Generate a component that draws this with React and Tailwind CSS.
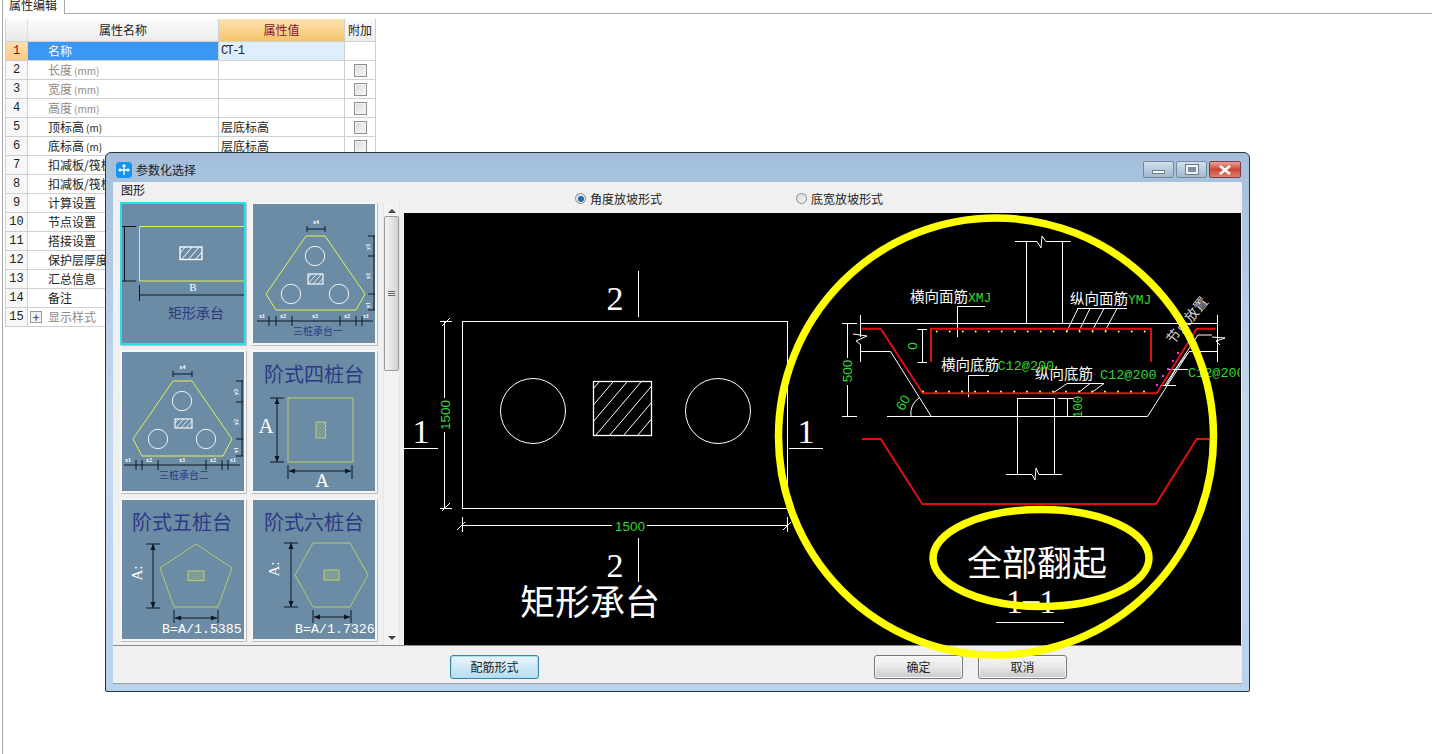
import React from 'react';

const rows = [
  { name: '名称', value: 'CT-1', selected: true, noCheck: true },
  { name: '长度', unit: '(mm)', muted: true },
  { name: '宽度', unit: '(mm)', muted: true },
  { name: '高度', unit: '(mm)', muted: true },
  { name: '顶标高', unit: '(m)', value: '层底标高' },
  { name: '底标高', unit: '(m)', value: '层底标高' },
  { name: '扣减板/筏板面筋' },
  { name: '扣减板/筏板底筋' },
  { name: '计算设置' },
  { name: '节点设置' },
  { name: '搭接设置' },
  { name: '保护层厚度' },
  { name: '汇总信息' },
  { name: '备注' },
  { name: '显示样式', muted: true, plus: true, noCheck: true },
];

const NAVY = '#2d3a82';
const LIME = '#e2f24e';
const OLIVE = '#b6ca72';
const GREEN = '#35d635';
const RED = '#e01010';

const PropRow = ({ row, index }) => (
  <div className="flex h-[19px] border-b border-[#cfcfcf] text-[12px] leading-[18px]">
    <div
      className={`w-[22px] shrink-0 border-r border-[#cfcfcf] text-center font-['Liberation_Mono',monospace] ${
        row.selected ? 'bg-gradient-to-b from-[#fde0b0] to-[#fbc987] text-[#8a1020]' : 'bg-[#f7f7f7] text-[#222]'
      }`}
    >
      {index + 1}
    </div>
    <div
      className={`relative w-[191px] shrink-0 border-r border-[#cfcfcf] pl-[20px] whitespace-nowrap ${
        row.selected ? 'bg-[#3a97f3] text-white' : row.muted ? 'text-[#8a8a8a]' : 'text-[#222]'
      }`}
    >
      {row.plus && (
        <span className="absolute left-[2px] top-[3px] flex h-[12px] w-[12px] items-center justify-center border border-[#999] bg-[#f0f0f0] text-[12px] leading-none text-[#333]">
          +
        </span>
      )}
      {row.name}
      {row.unit && <span className="ml-[2px] text-[10px]">{row.unit}</span>}
    </div>
    <div
      className={`w-[126px] shrink-0 border-r border-[#cfcfcf] pl-[2px] ${
        row.selected ? "bg-[#dfeefc] font-['Liberation_Mono',monospace] tracking-[-1.6px]" : ''
      } text-[#222]`}
    >
      {row.value}
    </div>
    <div className="flex w-[31px] shrink-0 items-center justify-center border-r border-[#cfcfcf]">
      {!row.noCheck && (
        <span className="h-[13px] w-[13px] border border-[#8e8e8e] bg-gradient-to-br from-[#d8d8d8] to-[#fafafa] shadow-[inset_0_0_0_1px_#f4f4f4]" />
      )}
    </div>
  </div>
);

const PropertyTable = () => (
  <div className="ml-[2px] mt-[5px] w-[371px] border-l border-[#cfcfcf] font-['Noto_Sans_CJK_SC','Liberation_Sans',sans-serif]">
    <div className="flex h-[23px] border-b border-[#cfcfcf] text-[12px] leading-[22px] text-[#222]">
      <div className="w-[22px] shrink-0 border-r border-[#e0e0e0] bg-gradient-to-b from-[#fafafa] to-[#e9e9e9]" />
      <div className="w-[191px] shrink-0 border-r border-[#cfcfcf] bg-gradient-to-b from-[#fbfbfb] to-[#ececec] text-center">属性名称</div>
      <div className="w-[126px] shrink-0 border-r border-[#cfcfcf] bg-gradient-to-b from-[#fbe3b0] to-[#f6c468] text-center text-[#8a0f3a]">属性值</div>
      <div className="w-[31px] shrink-0 border-r border-[#cfcfcf] bg-gradient-to-b from-[#fbfbfb] to-[#ececec] text-center">附加</div>
    </div>
    {rows.map((row, i) => (
      <PropRow key={i} row={row} index={i} />
    ))}
  </div>
);

const Hatch = ({ id, x, y, w, h, step, stroke = '#fff', sw = 1 }) => {
  const lines = [];
  for (let d = -h; d < w + h; d += step) {
    lines.push(<line key={d} x1={x + d} y1={y + h} x2={x + d + h * 0.85} y2={y} stroke={stroke} strokeWidth={sw} />);
  }
  return (
    <g>
      <clipPath id={id}>
        <rect x={x} y={y} width={w} height={h} />
      </clipPath>
      <g clipPath={`url(#${id})`}>{lines}</g>
      <rect x={x} y={y} width={w} height={h} fill="none" stroke={stroke} strokeWidth={sw + 0.3} />
    </g>
  );
};

const Tiny = ({ x, y, children, rotate }) => (
  <text
    x={x}
    y={y}
    fontSize="6"
    fontWeight="700"
    fill="#fff"
    textAnchor="middle"
    className="font-['Liberation_Serif',serif]"
    transform={rotate ? `rotate(-90 ${x} ${y})` : undefined}
  >
    {children}
  </text>
);

const Line = ({ p, stroke = '#0c1620', sw = 1 }) => (
  <line x1={p[0]} y1={p[1]} x2={p[2]} y2={p[3]} stroke={stroke} strokeWidth={sw} />
);

const ThreePile = ({ id, poly, circles, hatch, top, right, rightTicks, bottom, bottomTicks, caption, labels }) => (
  <svg viewBox="0 0 122 139" className="block h-full w-full">
    <polygon points={poly} fill="none" stroke={LIME} strokeWidth="1" />
    {circles.map((c, i) => (
      <circle key={i} cx={c[0]} cy={c[1]} r="9.7" fill="none" stroke="#fff" strokeWidth="0.9" />
    ))}
    <Hatch id={id} x={hatch[0]} y={hatch[1]} w={hatch[2]} h={hatch[3]} step={5} sw={0.8} />
    <Line p={[top[0], top[2], top[1], top[2]]} />
    <Line p={[top[0], top[2] - 3, top[0], top[2] + 3]} />
    <Line p={[top[1], top[2] - 3, top[1], top[2] + 3]} />
    <Tiny x={(top[0] + top[1]) / 2} y={top[2] - 5}>x4</Tiny>
    <Line p={[right, rightTicks[0], right, rightTicks[3]]} />
    {rightTicks.map((t) => (
      <Line key={t} p={[right - 6, t, right + 1, t]} />
    ))}
    <Tiny x={right - 4} y={rightTicks[0] + 11} rotate>y3</Tiny>
    <Tiny x={right - 4} y={rightTicks[1] + 20} rotate>y2</Tiny>
    <Tiny x={right - 4} y={rightTicks[2] + 11} rotate>y1</Tiny>
    <Line p={[bottom[0], bottom[2], bottom[1], bottom[2]]} />
    {bottomTicks.map((t) => (
      <Line key={t} p={[t, bottom[2] - 5, t, bottom[2] + 5]} />
    ))}
    {labels.map((l, i) => (
      <Tiny key={i} x={l[0]} y={bottom[2] - 3}>{l[1]}</Tiny>
    ))}
    <text x={caption[0]} y={caption[1]} fontSize="10" fill={NAVY} textAnchor="middle">
      {caption[2]}
    </text>
  </svg>
);

const VArrow = ({ x, y1, y2 }) => (
  <g>
    <Line p={[x, y1, x, y2]} sw={1} />
    <polygon points={`${x},${y1} ${x - 2.5},${y1 + 6} ${x + 2.5},${y1 + 6}`} fill="#0c1620" />
    <polygon points={`${x},${y2} ${x - 2.5},${y2 - 6} ${x + 2.5},${y2 - 6}`} fill="#0c1620" />
    <Line p={[x - 7, y1, x + 7, y1]} />
    <Line p={[x - 7, y2, x + 7, y2]} />
  </g>
);

const HArrow = ({ y, x1, x2, top, bottom }) => (
  <g>
    <Line p={[x1, y, x2, y]} />
    <polygon points={`${x1},${y} ${x1 + 6},${y - 2.5} ${x1 + 6},${y + 2.5}`} fill="#0c1620" />
    <polygon points={`${x2},${y} ${x2 - 6},${y - 2.5} ${x2 - 6},${y + 2.5}`} fill="#0c1620" />
    <Line p={[x1 - 1, top, x1 - 1, bottom]} />
    <Line p={[x2 + 1, top, x2 + 1, bottom]} />
  </g>
);

const StepTitle = ({ x, children }) => (
  <text x={x} y="30" fontSize="20" fill={NAVY}>
    {children}
  </text>
);

const Thumb1 = () => (
  <svg viewBox="0 0 122 139" className="block h-full w-full">
    <path d="M122 22.5H17.5V77H122" fill="none" stroke={LIME} strokeWidth="1" />
    <Line p={[2.5, 22, 2.5, 77]} />
    <Line p={[0, 22.5, 14, 22.5]} />
    <Line p={[0, 77, 14, 77]} />
    <Line p={[17, 91, 122, 91]} />
    <Line p={[17.5, 81, 17.5, 97]} />
    <text x="71" y="87" fontSize="11" fill="#fff" textAnchor="middle" className="font-['Liberation_Serif',serif]">B</text>
    <Hatch id="t1" x={58} y={43} w={22} h={12.5} step={7} />
    <text x="46" y="114" fontSize="14" fill={NAVY}>矩形承台</text>
  </svg>
);

const Thumb4 = () => (
  <svg viewBox="0 0 122 139" className="block h-full w-full">
    <StepTitle x={11}>阶式四桩台</StepTitle>
    <rect x="35" y="46" width="65" height="64" fill="none" stroke={OLIVE} strokeWidth="1" />
    <Hatch id="t4" x={63} y={70} w={9.5} h={16} step={3} stroke={OLIVE} sw={0.8} />
    <VArrow x={24} y1={46} y2={110} />
    <text x="13" y="81" fontSize="21" fill="#fff" textAnchor="middle" className="font-['Liberation_Serif',serif]">A</text>
    <HArrow y={119} x1={36} x2={98} top={113} bottom={127} />
    <text x="69" y="135" fontSize="19" fill="#fff" textAnchor="middle" className="font-['Liberation_Serif',serif]">A</text>
  </svg>
);

const Thumb5 = () => (
  <svg viewBox="0 0 122 139" className="block h-full w-full">
    <StepTitle x={10}>阶式五桩台</StepTitle>
    <polygon points="74,44 110,68 96,107 52,107 38,68" fill="none" stroke={OLIVE} strokeWidth="1" />
    <Hatch id="t5" x={66} y={71} w={16} h={9.5} step={3} stroke={OLIVE} sw={0.8} />
    <VArrow x={31} y1={44} y2={108} />
    <text x="20" y="73" fontSize="15" fill="#fff" textAnchor="middle" transform="rotate(-90 20 73)" className="font-['Liberation_Serif',serif]">A:</text>
    <HArrow y={118} x1={53} x2={95} top={110} bottom={123} />
    <text x="40" y="133" fontSize="13.3" fill="#fff" className="font-['Liberation_Mono',monospace]">B=A/1.5385</text>
  </svg>
);

const Thumb6 = () => (
  <svg viewBox="0 0 122 139" className="block h-full w-full">
    <StepTitle x={11}>阶式六桩台</StepTitle>
    <polygon points="60,43 97,43 115,75 97,107 60,107 42,75" fill="none" stroke={OLIVE} strokeWidth="1" />
    <Hatch id="t6" x={71} y={70} w={15} h={10} step={3} stroke={OLIVE} sw={0.8} />
    <VArrow x={38} y1={43} y2={107} />
    <text x="26" y="69" fontSize="15" fill="#fff" textAnchor="middle" transform="rotate(-90 26 69)" className="font-['Liberation_Serif',serif]">A:</text>
    <HArrow y={117} x1={61} x2={97} top={110} bottom={123} />
    <text x="42" y="133" fontSize="13.3" fill="#fff" className="font-['Liberation_Mono',monospace]">B=A/1.7326</text>
  </svg>
);

const Tile = ({ selected, children }) => (
  <div className={`h-[143px] w-[126px] p-[2px] shadow-[1px_1px_0_#bdbdbd] ${selected ? 'bg-[#22e4ec]' : 'bg-[#f6f6f6]'}`}>
    <div className="h-full w-full bg-[#6c8ca5]">{children}</div>
  </div>
);

const Scrollbar = () => (
  <div className="flex w-[17px] flex-col items-center border-x border-[#e6e6e6] bg-[#f3f3f3]">
    <div className="flex h-[14px] items-center justify-center pt-[3px]">
      <span className="border-x-[4px] border-b-[4px] border-x-transparent border-b-[#444]" />
    </div>
    <div className="flex h-[155px] w-[15px] shrink-0 flex-col items-center justify-center gap-[1px] rounded-[2px] border border-[#9a9a9a] bg-gradient-to-r from-[#f4f4f4] to-[#d2d2d2]">
      <span className="h-px w-[7px] bg-[#666]" />
      <span className="h-px w-[7px] bg-[#666]" />
      <span className="h-px w-[7px] bg-[#666]" />
    </div>
    <div className="flex-1" />
    <div className="flex h-[14px] items-center justify-center">
      <span className="border-x-[4px] border-t-[4px] border-x-transparent border-t-[#444]" />
    </div>
  </div>
);

const ShapeList = () => (
  <div className="flex w-[290px] shrink-0 flex-col">
    <div className="h-5 pl-2 pt-[1px] text-[12px] leading-[14px] text-[#111]">图形</div>
    <div className="flex min-h-0 flex-1">
      <div className="w-[270px] shrink-0 overflow-hidden pl-[7px]">
        <div className="grid grid-cols-[126px_126px] gap-[5px]">
          <Tile selected><Thumb1 /></Tile>
          <Tile>
            <ThreePile
              id="t2"
              poly="53,32 72,32 112,90 103,106 23,106 13,90"
              circles={[[62, 52], [38, 90], [86, 90]]}
              hatch={[55, 70, 15, 10]}
              top={[54, 72, 25]}
              right={121}
              rightTicks={[32, 52, 90, 106]}
              bottom={[4, 120, 117]}
              bottomTicks={[16, 23, 39, 87, 103, 109]}
              labels={[[9, 'x1'], [30, 'x2'], [62, 'x3'], [94, 'x2'], [113, 'x1']]}
              caption={[65, 131, '三桩承台一']}
            />
          </Tile>
          <Tile>
            <ThreePile
              id="t3"
              poly="51,29 70,29 110,87 101,104 20,104 11,87"
              circles={[[60, 49], [36, 87], [84, 87]]}
              hatch={[53, 67, 17, 9]}
              top={[51, 70, 22]}
              right={120}
              rightTicks={[29, 50, 87, 104]}
              bottom={[2, 118, 113]}
              bottomTicks={[14, 20, 36, 84, 100, 106]}
              labels={[[6, 'x1'], [27, 'x2'], [60, 'x3'], [91, 'x2'], [111, 'x1']]}
              caption={[62, 127, '三桩承台二']}
            />
          </Tile>
          <Tile><Thumb4 /></Tile>
          <Tile><Thumb5 /></Tile>
          <Tile><Thumb6 /></Tile>
        </div>
      </div>
      <Scrollbar />
    </div>
  </div>
);

const Radio = ({ checked, label }) => (
  <label className="flex items-center gap-[4px] text-[12px] leading-none text-[#222]">
    <span className="flex h-[11px] w-[11px] items-center justify-center rounded-full border border-[#7d8b99] bg-gradient-to-br from-[#d8d8d8] to-[#f8f8f8]">
      {checked && <span className="h-[6px] w-[6px] rounded-full bg-[#1c6cab]" />}
    </span>
    {label}
  </label>
);

// dimension tick: short slash across the end of a dimension line
const Slash = ({ x, y }) => <line x1={x - 4} y1={y + 4} x2={x + 4} y2={y - 4} stroke="#fff" />;

const W = ({ d, sw = 1 }) => <path d={d} fill="none" stroke="#fff" strokeWidth={sw} />;

const GreenText = ({ x, y, rotate, anchor = 'start', size = 13.5, sans, children }) => (
  <text
    x={x}
    y={y}
    fill={GREEN}
    fontSize={size}
    textAnchor={anchor}
    transform={rotate ? `rotate(${rotate} ${x} ${y})` : undefined}
    className={sans ? "font-['Liberation_Sans',sans-serif]" : "font-['Liberation_Mono',monospace]"}
  >
    {children}
  </text>
);

const topDots = Array.from({ length: 17 }, (_, i) => 936.7 + i * 13);
const bottomDots = Array.from({ length: 18 }, (_, i) => 923 + i * 13);
const pinkDots = [[1178, 353], [1173, 361], [1168, 369], [1163, 376], [1157, 385]];

const Drawing = () => (
  <svg viewBox="404 213 836 432" className="block h-[432px] w-[836px]">
    {/* plan view */}
    <rect x="462.5" y="321.5" width="325" height="187" fill="none" stroke="#fff" />
    <circle cx="533" cy="411" r="32.5" fill="none" stroke="#fff" />
    <circle cx="718" cy="411" r="32.5" fill="none" stroke="#fff" />
    <Hatch id="plan" x={593.5} y={381.5} w={58} h={54} step={14} />
    <W d="M638.5 271V317M638.5 538V582M404 448.5H438M789 448.5H823" />
    <W d="M444.5 321V398M444.5 432V508M440 321.5H452M440 508.5H452M462.5 525.5H612M647 525.5H788M462.5 517V532M787.5 517V532" />
    <Slash x={446} y={322} />
    <Slash x={446} y={507} />
    <Slash x={461} y={526} />
    <Slash x={787} y={526} />
    <GreenText x={450} y={415} rotate={-90} anchor="middle" sans>1500</GreenText>
    <GreenText x={630} y={531} anchor="middle" sans>1500</GreenText>
    <g fill="#fff" fontSize="34" textAnchor="middle" className="font-['Liberation_Serif',serif]">
      <text x="615" y="310">2</text>
      <text x="615" y="577">2</text>
      <text x="421" y="443">1</text>
      <text x="806" y="443">1</text>
    </g>
    <text x="520" y="615" fontSize="35" fill="#fff">矩形承台</text>

    {/* section */}
    <W d="M1026.5 242V323M1062.5 242V323M1015 241.5H1037L1041 248L1042 236L1046 241.5H1071" />
    <W d="M861 323.5H1217M860.5 315V337M860.5 345V362M861 351.5H890.5L931 416M887 416.5H1147.5L1189 351.5H1217M1217.5 315V362" />
    <W d="M853 334L867 336L856 341L861 345M1212 337L1225 338L1216 341L1220 345M1198 335H1212M1198 335L1165 385" />
    <W d="M1168 369.5H1188M1160 385.5H1176M1188 353L1175 370M1176 369L1166 386" />
    <W d="M847.5 323V358M847.5 385V417M842 323.5H857M842 416.5H857" />
    <W d="M922.5 329V363M917.5 329.5H927M917.5 362.5H927" />
    <W d="M1017.5 398V474M1054.5 398V474M1017 398.5H1055M1006 474.5H1032L1035 480L1036 468L1039 474.5H1062" />
    <W d="M1067.5 398V416M1058 398.5H1074M1058 416.5H1074" />
    <W d="M911 416A18 18 0 0 1 919 398" />
    <W d="M957.5 337V306.5H985M968.5 397V375.5H989" />
    <W d="M1077 308.5H1127M1078 308.5L1067 331M1090 308.5L1079 331M1104 308.5L1092 331M1117 308.5L1105 331" />
    <W d="M1067 383.5H1104M1067 383.5L1053 393M1090 383.5L1078 393M1104 383.5L1091 393" />
    <path d="M862 328.7H880.7L922.7 393.3H1156.7L1196.7 328.7H1215.7M931 361.7V328.7H1151V361.7" fill="none" stroke={RED} strokeWidth="2" />
    <path d="M862 439H880.7L922.3 504H1156L1196.7 439H1210.7" fill="none" stroke={RED} strokeWidth="2" />
    {topDots.map((x) => (
      <circle key={x} cx={x} cy="331.5" r="1" fill="#ffff50" />
    ))}
    {bottomDots.map((x) => (
      <circle key={x} cx={x} cy="391.5" r="1" fill="#ffff50" />
    ))}
    {pinkDots.map((p) => (
      <circle key={p[0]} cx={p[0]} cy={p[1]} r="1.2" fill="#e040e0" />
    ))}
    <GreenText x={852} y={371} rotate={-90} anchor="middle" sans>500</GreenText>
    <GreenText x={917} y={346} rotate={-90} anchor="middle" sans>0</GreenText>
    <GreenText x={1082} y={407} rotate={-90} anchor="middle" size={12.5}>100</GreenText>
    <GreenText x={907} y={405} rotate={-60} anchor="middle" sans>60</GreenText>
    <g fill="#fff" fontSize="14.5">
      <text x="910" y="302">横向面筋</text>
      <text x="1070" y="304">纵向面筋</text>
      <text x="941" y="370">横向底筋</text>
      <text x="1035" y="379">纵向底筋</text>
    </g>
    <GreenText x={968} y={302} size={13}>XMJ</GreenText>
    <GreenText x={1128} y={304} size={13}>YMJ</GreenText>
    <GreenText x={997.5} y={370}>C12@200</GreenText>
    <GreenText x={1100} y={379}>C12@200</GreenText>
    <GreenText x={1188} y={377}>C12@200</GreenText>
    <text x="1173" y="345" fontSize="14" fill="#cfcfcf" transform="rotate(-50 1173 345)">节点放置</text>
    <text x="967" y="576" fontSize="35" fill="#fff">全部翻起</text>
    <text x="1031" y="613" fontSize="33" fill="#fff" textAnchor="middle" className="font-['Liberation_Serif',serif]">
      1<tspan dy="-3">–</tspan><tspan dy="3">1</tspan>
    </text>
    <W d="M996 622.5H1064" />
  </svg>
);

const DialogButton = ({ children, primary }) => (
  <button
    className={`h-[24px] w-[89px] rounded-[3px] border text-[12px] leading-none text-[#222] ${
      primary
        ? 'border-[#3a83ad] bg-gradient-to-b from-[#e9f5fc] to-[#b7dcf0] shadow-[inset_0_0_0_1px_#a8dff5]'
        : 'border-[#777] bg-gradient-to-b from-[#f6f6f6] via-[#e8e8e8] to-[#c9c9c9] shadow-[inset_0_0_0_1px_#fafafa]'
    }`}
  >
    {children}
  </button>
);

const TitleBar = () => (
  <div className="flex h-[28px] items-center justify-between pl-[3px] pr-[1px] pt-[3px]">
    <div className="flex items-center gap-[4px]">
      <svg width="16" height="16" viewBox="0 0 16 16">
        <rect width="16" height="16" rx="3.5" fill="#1694f3" />
        <path d="M8 3V13M3 8H13M6.5 4.5L8 3L9.5 4.5M4.5 6.5L3 8L4.5 9.5M11.5 6.5L13 8L11.5 9.5" fill="none" stroke="#fff" strokeWidth="1.3" />
      </svg>
      <span className="text-[12px] text-[#222]">参数化选择</span>
    </div>
    <div className="flex gap-[2px]">
      <div className="flex h-[17px] w-[31px] items-end justify-center rounded-[2px] border border-[#76889b] bg-gradient-to-b from-[#d3e0ed] to-[#a3b8cf] pb-[3px]">
        <span className="h-[4px] w-[13px] border border-[#6c7c8c] bg-white" />
      </div>
      <div className="flex h-[17px] w-[31px] items-center justify-center rounded-[2px] border border-[#76889b] bg-gradient-to-b from-[#d3e0ed] to-[#a3b8cf]">
        <span className="h-[9px] w-[12px] border-2 border-[#f4f4f4] bg-[#7e8fa2] outline outline-1 outline-[#6c7c8c]" />
      </div>
      <div className="flex h-[17px] w-[32px] items-center justify-center rounded-[2px] border border-[#7e3b40] bg-gradient-to-b from-[#e5a294] via-[#cb4639] to-[#dd8070]">
        <svg width="14" height="10" viewBox="0 0 14 10">
          <path d="M2 1L12 9M12 1L2 9" stroke="#fff" strokeWidth="2.6" />
        </svg>
      </div>
    </div>
  </div>
);

const Dialog = () => (
  <div className="absolute left-[105px] top-[152px] flex h-[540px] w-[1145px] flex-col rounded-t-[6px] rounded-b-[2px] border border-[#24383c] bg-gradient-to-b from-[#a4bfdc] via-[#c4d9ee] to-[#b8d2ee] px-[7px] pb-[7px] pt-[1px] font-['Noto_Sans_CJK_SC','Liberation_Sans',sans-serif]">
    <TitleBar />
    <div className="flex min-h-0 flex-1 flex-col border-b border-[#a0a0a0] bg-[#f0f0f0]">
      <div className="flex h-[464px] border-b border-[#8a8a8a]">
        <ShapeList />
        <div className="flex flex-1 flex-col pr-[1px]">
          <div className="flex h-[31px] items-center gap-[134px] pl-[172px] pt-[2px]">
            <Radio checked label="角度放坡形式" />
            <Radio label="底宽放坡形式" />
          </div>
          <div className="ml-[1px] flex-1 overflow-hidden bg-black">
            <Drawing />
          </div>
        </div>
      </div>
      <div className="flex flex-1 items-start pl-[337px] pt-[9px]">
        <DialogButton primary>配筋形式</DialogButton>
        <div className="ml-[335px] flex gap-[15px]">
          <DialogButton>确定</DialogButton>
          <DialogButton>取消</DialogButton>
        </div>
      </div>
    </div>
  </div>
);

const App = () => (
  <div className="relative h-[754px] w-[1432px] overflow-hidden bg-white font-['Noto_Sans_CJK_SC','Liberation_Sans',sans-serif]">
    <div className="ml-[2px] h-full border-l border-[#a8a8a8]">
      <div className="flex h-[14px]">
        <div className="h-full w-[62px] shrink-0 overflow-hidden border-r border-[#a8a8a8] pl-[6px] text-[12px] leading-[12px] text-[#222]">
          <div className="-mt-[1px]">属性编辑</div>
        </div>
        <div className="flex-1 border-b border-[#a8a8a8]" />
      </div>
      <PropertyTable />
    </div>
    <Dialog />
    {/* hand drawn yellow marks sit on top of the dialog */}
    <svg className="pointer-events-none absolute left-0 top-0" width="1432" height="754" viewBox="0 0 1432 754">
      <ellipse cx="996" cy="436.5" rx="217.5" ry="218.5" fill="none" stroke="#ffff00" strokeWidth="7.5" />
      <ellipse cx="1041" cy="558" rx="108" ry="48.5" fill="none" stroke="#ffff00" strokeWidth="7.5" />
    </svg>
  </div>
);

export default App;
